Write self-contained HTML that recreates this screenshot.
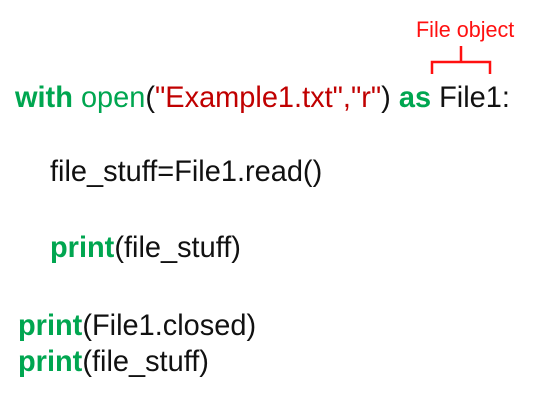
<!DOCTYPE html>
<html><head><style>
body{margin:0;width:534px;height:405px;background:#fff;overflow:hidden;position:relative;font-family:"Liberation Sans",sans-serif}
.l{position:absolute;font-size:30px;line-height:1;color:#111;white-space:nowrap;transform:scaleX(0.965);transform-origin:left top}
.g{color:#00a650}.b{font-weight:bold}.r{color:#c00000}
</style></head><body>
<div style="position:absolute;left:416px;top:17px;font-size:22px;color:#ff1010;transform:scaleX(.98);transform-origin:left top;white-space:nowrap">File object</div>
<svg style="position:absolute;left:0;top:0" width="534" height="405"><path d="M432 74 V62 H490 V74 M461 62 V46" fill="none" stroke="#ff1010" stroke-width="2.5"/></svg>
<div class="l" style="left:15px;top:83px"><span class="g b">with</span> <span class="g">open</span>(<span class="r">"Example1.txt","r"</span>) <span class="g b">as</span> File1:</div>
<div class="l" style="left:50px;top:157px">file_stuff=File1.read()</div>
<div class="l" style="left:50px;top:233px"><span class="g b">print</span>(file_stuff)</div>
<div class="l" style="left:18px;top:311px"><span class="g b">print</span>(File1.closed)</div>
<div class="l" style="left:18px;top:347px"><span class="g b">print</span>(file_stuff)</div>
</body></html>
